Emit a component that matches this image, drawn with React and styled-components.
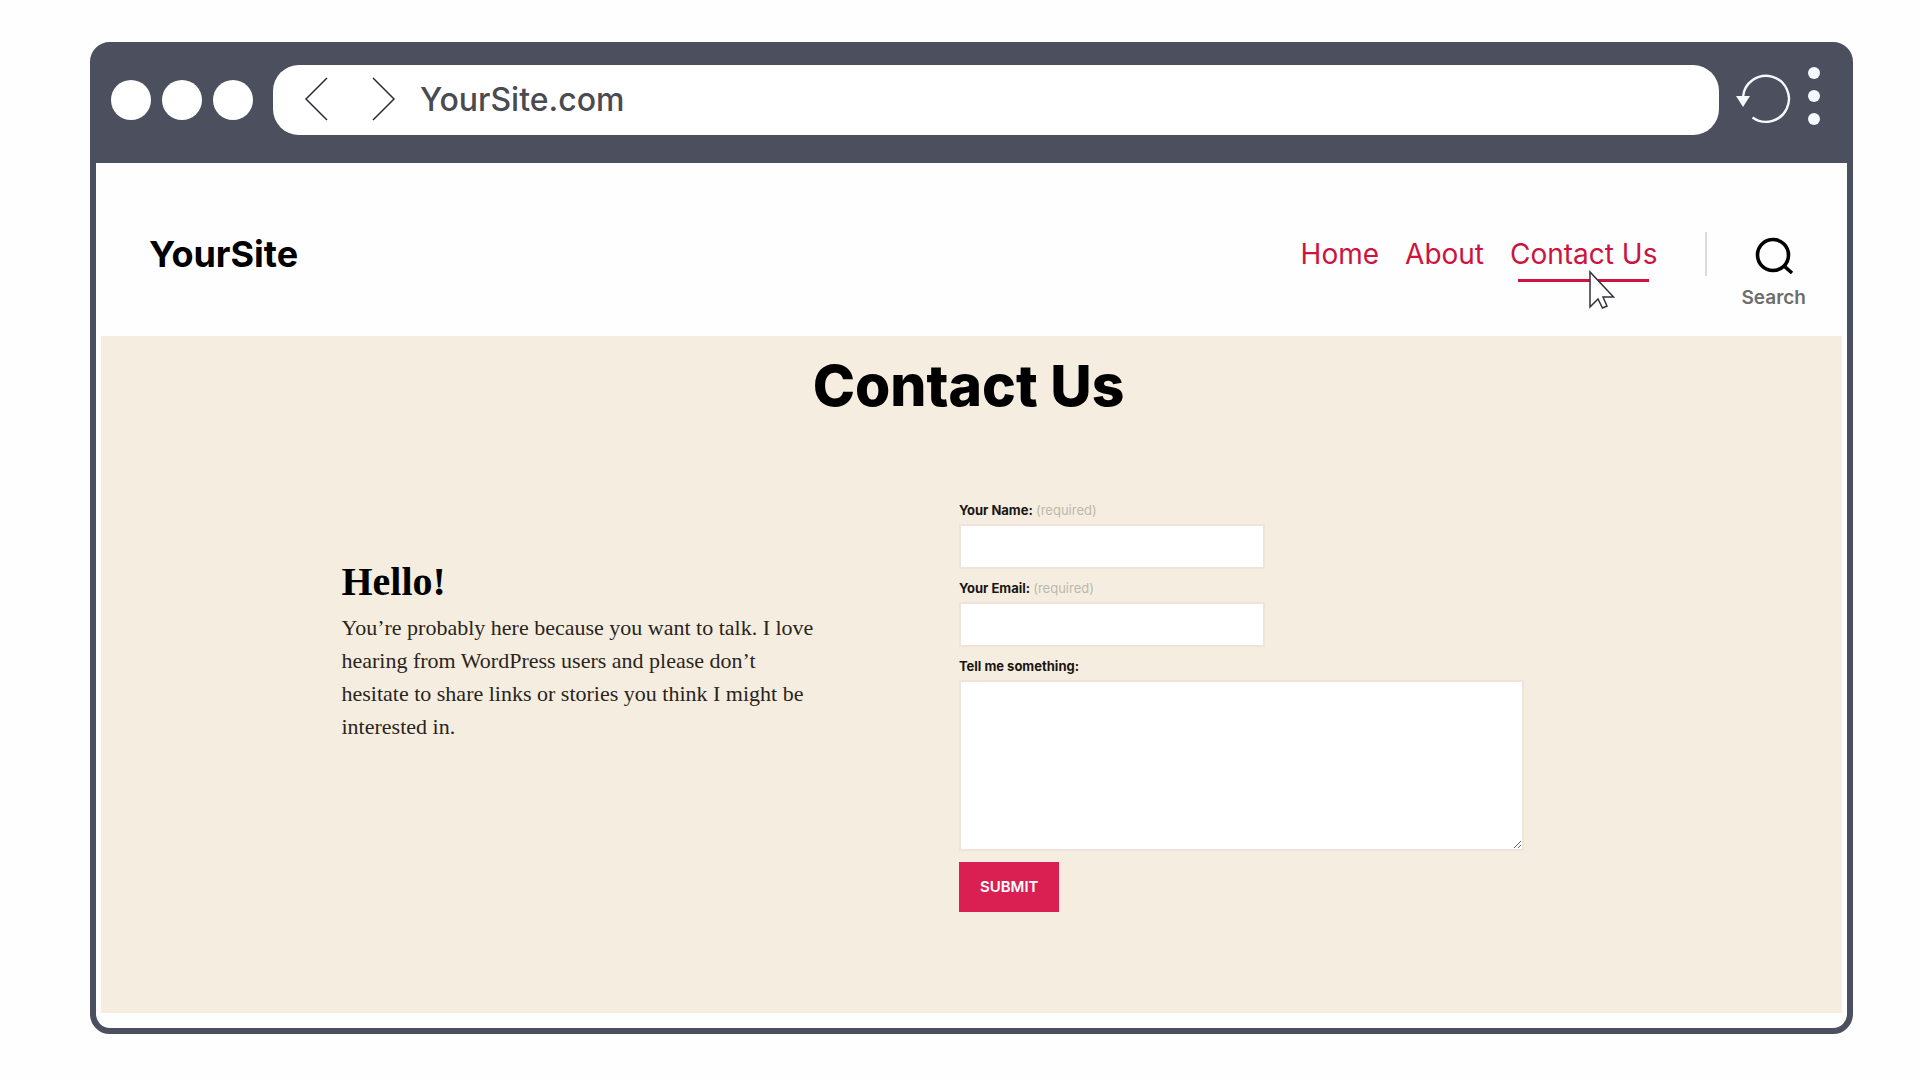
import React, { useState } from "react";
import styled, { createGlobalStyle } from "styled-components";

const GlobalStyle = createGlobalStyle`
  * {
    box-sizing: border-box;
  }

  body {
    margin: 0;
    background-color: #fefefe;
    font-family: Inter, "Liberation Sans", sans-serif;
    color: #000;
  }
`;

const Browser = styled.div`
  margin: 42px 67px 46px 90px;
  border: 6px solid #4c505e;
  border-radius: 20px;
  background-color: #fefefe;
`;

const Toolbar = styled.div`
  display: flex;
  align-items: flex-start;
  height: 115px;
  padding: 17px 27px 0 15px;
  background-color: #4c505e;
`;

const IconButton = styled.button`
  display: flex;
  padding: 0;
  border: none;
  background: none;
  cursor: pointer;
`;

const Lights = styled.div`
  display: flex;
  align-items: center;
  gap: 11px;
  height: 70px;
  margin-right: 20px;
`;

const Light = styled.span`
  width: 40px;
  height: 40px;
  border-radius: 50%;
  background-color: #fff;
`;

const AddressBar = styled.div`
  display: flex;
  align-items: center;
  flex: 1;
  height: 70px;
  padding: 0 31px;
  border-radius: 26px;
  background-color: #fff;
`;

const Arrows = styled.div`
  display: flex;
  gap: 44px;
  margin-right: 24px;
`;

const Address = styled.input`
  flex: 1;
  min-width: 0;
  padding: 0;
  border: none;
  outline: none;
  background: none;
  font-family: inherit;
  font-size: 32px;
  font-weight: 500;
  line-height: 40px;
  color: #4a4a52;
`;

const Tools = styled.div`
  display: flex;
  align-items: center;
  gap: 16px;
  height: 66px;
  margin-left: 17px;
`;

const Header = styled.header`
  display: flex;
  align-items: flex-start;
  justify-content: space-between;
  height: 173px;
  padding: 69px 41px 0 53px;
`;

const Logo = styled.a`
  font-size: 36px;
  font-weight: 700;
  line-height: 44px;
  color: #000;
  text-decoration: none;
`;

const Right = styled.div`
  display: flex;
  align-items: flex-start;
`;

const Nav = styled.nav`
  display: flex;
  gap: 26px;
  padding-right: 48px;
  border-right: 2px solid #dcdcdc;
`;

const NavLink = styled.a`
  position: relative;
  font-size: 28px;
  line-height: 44px;
  color: #cd1340;
  text-decoration: none;
`;

const Underline = styled.span`
  position: absolute;
  right: 8px;
  bottom: -6px;
  left: 8px;
  height: 3px;
  background-color: #cd1340;
`;

const Pointer = styled.svg`
  position: absolute;
  top: 38px;
  left: 79px;
`;

const SearchButton = styled(IconButton)`
  flex-direction: column;
  align-items: center;
  gap: 12px;
  margin-left: 34px;
  padding-top: 4px;
  font-family: inherit;
  font-size: 19px;
  font-weight: 600;
  line-height: 24px;
  color: #6d6d6d;
`;

const Main = styled.main`
  margin: 0 5px 15px;
  padding: 16px 24px 101px;
  background-color: #f5eee0;
`;

const Title = styled.h1`
  margin: 0 0 80px;
  padding-right: 6px;
  font-size: 57px;
  font-weight: 800;
  line-height: 68px;
  text-align: center;
`;

const Columns = styled.div`
  display: grid;
  grid-template-columns: 49% 51%;
  max-width: 1260px;
  margin: 0 auto;
`;

const Intro = styled.section`
  max-width: 480px;
  padding-top: 60px;
  font-family: "Liberation Serif", serif;
`;

const Hello = styled.h2`
  margin: 0 0 7px;
  font-size: 40px;
  line-height: 44px;
`;

const Text = styled.p`
  margin: 0;
  font-size: 22px;
  line-height: 33px;
  color: #2a241c;
`;

const Form = styled.form`
  display: flex;
  flex-direction: column;
  align-items: flex-start;
`;

const Label = styled.label`
  margin-bottom: 4px;
  font-size: 13px;
  font-weight: 700;
  line-height: 20px;
  color: #1a1512;
`;

const Required = styled.span`
  font-weight: 400;
  color: #bdb8ab;
`;

const Input = styled.input`
  width: 306px;
  max-width: 100%;
  height: 45px;
  margin-bottom: 9px;
  padding: 0 12px;
  border: 2px solid #efe3da;
  outline: none;
  background-color: #fff;
  font: inherit;
`;

const TextArea = styled.textarea`
  width: 88%;
  height: 171px;
  margin-bottom: 11px;
  padding: 12px;
  border: 2px solid #efe3da;
  outline: none;
  background-color: #fff;
  font: inherit;
`;

const Submit = styled.button`
  height: 50px;
  padding: 0 21px 2px;
  border: none;
  background-color: #da1f52;
  font-family: inherit;
  font-size: 15px;
  font-weight: 600;
  color: #fff;
  cursor: pointer;
`;

const links = ["Home", "About", "Contact Us"];

const fields = [
  { id: "name", label: "Your Name:", type: "text" },
  { id: "email", label: "Your Email:", type: "email" },
];

const BrowserBar = () => {
  const [url, setUrl] = useState("YourSite.com");

  return (
    <Toolbar>
      <Lights>
        <Light />
        <Light />
        <Light />
      </Lights>
      <AddressBar>
        <Arrows>
          <IconButton aria-label="Back">
            <svg width="24" height="46" fill="none" stroke="#2c2c34" strokeWidth="1.500">
              <path d="M23 1 L2 22 L23 43" />
            </svg>
          </IconButton>
          <IconButton aria-label="Forward">
            <svg width="24" height="46" fill="none" stroke="#2c2c34" strokeWidth="1.500">
              <path d="M1 1 L22 22 L1 43" />
            </svg>
          </IconButton>
        </Arrows>
        <Address aria-label="Address" value={url} onChange={(e) => setUrl(e.target.value)} />
      </AddressBar>
      <Tools>
        <IconButton aria-label="Reload">
          <svg width="56" height="56" fill="none">
            <path d="M7 27 A23 23 0 1 1 16.500 47.500" stroke="#f4f8ff" strokeWidth="2.400" />
            <path d="M0 26 H14 L7 37 Z" fill="#f4f8ff" />
          </svg>
        </IconButton>
        <IconButton aria-label="Menu">
          <svg width="12" height="62" fill="#f4f8ff">
            <circle cx="6" cy="6" r="6" />
            <circle cx="6" cy="29" r="6" />
            <circle cx="6" cy="52" r="6" />
          </svg>
        </IconButton>
      </Tools>
    </Toolbar>
  );
};

const SiteHeader = () => (
  <Header>
    <Logo href="#">YourSite</Logo>
    <Right>
      <Nav>
        {links.map((link) => (
          <NavLink key={link} href="#">
            {link}
            {link === "Contact Us" && (
              <>
                <Underline />
                <Pointer width="26" height="40" viewBox="0 0 26 40">
                  <path
                    d="M1 2 V37 L9 29 L13.500 38 L18 36 L14 27 H24.500 Z"
                    fill="#fff"
                    stroke="#33333a"
                    strokeWidth="1.500"
                  />
                </Pointer>
              </>
            )}
          </NavLink>
        ))}
      </Nav>
      <SearchButton>
        <svg width="40" height="38" fill="none" stroke="#000" strokeWidth="3.600">
          <circle cx="19" cy="19" r="15.500" />
          <path d="M29.500 29.500 L38 37" />
        </svg>
        Search
      </SearchButton>
    </Right>
  </Header>
);

const ContactForm = () => (
  <Form onSubmit={(e) => e.preventDefault()}>
    {fields.map((field) => (
      <React.Fragment key={field.id}>
        <Label htmlFor={field.id}>
          {field.label} <Required>(required)</Required>
        </Label>
        <Input id={field.id} type={field.type} required />
      </React.Fragment>
    ))}
    <Label htmlFor="message">Tell me something:</Label>
    <TextArea id="message" />
    <Submit type="submit">SUBMIT</Submit>
  </Form>
);

const App = () => {
  return (
    <>
      <GlobalStyle />
      <Browser>
        <BrowserBar />
        <SiteHeader />
        <Main>
          <Title>Contact Us</Title>
          <Columns>
            <Intro>
              <Hello>Hello!</Hello>
              <Text>
                You’re probably here because you want to talk. I love hearing from WordPress users
                and please don’t hesitate to share links or stories you think I might be interested
                in.
              </Text>
            </Intro>
            <ContactForm />
          </Columns>
        </Main>
      </Browser>
    </>
  );
};

export default App;
